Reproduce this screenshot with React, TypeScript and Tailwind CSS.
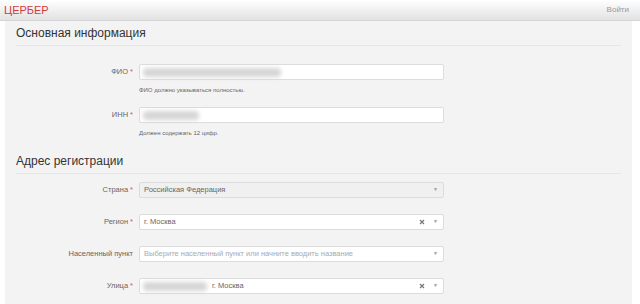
const font = "font-['Liberation_Sans',Arial,sans-serif]";

function Label({ text, required }: { text: string; required?: boolean }) {
  return (
    <div className="w-[123px] shrink-0 pr-[6px] text-right text-[7.5px] text-[#666]">
      {text}
      {required && <span className="ml-[2px] text-[#d9534f]">*</span>}
    </div>
  );
}

function Blur({ w }: { w: number }) {
  return (
    <div
      className="h-[9px] rounded-sm bg-[#d6d6d6] blur-[2px]"
      style={{ width: w }}
    />
  );
}

function Arrow() {
  return <span className="text-[5px] text-[#999]">▼</span>;
}

function Clear() {
  return (
    <svg width="6" height="6" viewBox="0 0 6 6" className="mr-[8px]">
      <path d="M1 1L5 5M5 1L1 5" stroke="#777" strokeWidth="1.2" />
    </svg>
  );
}

export default function App() {
  return (
    <div className={`${font} h-[304px] w-[640px] overflow-hidden bg-white`}>
      <div className="flex h-[21px] items-center justify-between border-b border-[#d4d4d4] bg-gradient-to-b from-white to-[#e2e2e2] pl-[4px] pr-[11px]">
        <span className="text-[11px] leading-none text-[#d23b3b]">ЦЕРБЕР</span>
        <span className="text-[8px] text-[#9a9a9a]">Войти</span>
      </div>

      <div className="ml-[5px] h-full w-[627px] bg-[#f3f3f3] px-[11px]">
        <div className="border-b border-[#e6e6e6] pt-[3px] pb-[3px] text-[12px] text-[#333]">
          Основная информация
        </div>

        <div className="mt-[18px] flex items-center">
          <Label text="ФИО" required />
          <div className="flex h-[16px] w-[305px] items-center rounded-[2px] border border-[#dcdcdc] bg-white pl-[3px]">
            <Blur w={138} />
          </div>
        </div>
        <div className="ml-[123px] mt-[6px] text-[6px] text-[#666]">ФИО должно указываться полностью.</div>

        <div className="mt-[12px] flex items-center">
          <Label text="ИНН" required />
          <div className="flex h-[16px] w-[305px] items-center rounded-[2px] border border-[#dcdcdc] bg-white pl-[3px]">
            <Blur w={56} />
          </div>
        </div>
        <div className="ml-[123px] mt-[6px] text-[6px] text-[#666]">Должен содержать 12 цифр.</div>

        <div className="mt-[14px] border-b border-[#e6e6e6] pb-[3px] text-[12px] text-[#333]">
          Адрес регистрации
        </div>

        <div className="mt-[8px] flex items-center">
          <Label text="Страна" required />
          <div className="flex h-[16px] w-[305px] items-center justify-between rounded-[2px] border border-[#dcdcdc] bg-[#f0f0f0] pl-[4px] pr-[5px] text-[7.5px] text-[#666]">
            <span>Российская Федерация</span>
            <Arrow />
          </div>
        </div>

        <div className="mt-[16px] flex items-center">
          <Label text="Регион" required />
          <div className="flex h-[16px] w-[305px] items-center justify-between rounded-[2px] border border-[#dcdcdc] bg-white pl-[4px] pr-[5px] text-[7.5px] text-[#666]">
            <span>г. Москва</span>
            <span className="flex items-center">
              <Clear />
              <Arrow />
            </span>
          </div>
        </div>

        <div className="mt-[16px] flex items-center">
          <Label text="Населенный пункт" />
          <div className="flex h-[16px] w-[305px] items-center justify-between rounded-[2px] border border-[#dcdcdc] bg-white pl-[4px] pr-[5px] text-[7.5px] text-[#aaa]">
            <span>Выберите населенный пункт или начните вводить название</span>
            <Arrow />
          </div>
        </div>

        <div className="mt-[16px] flex items-center">
          <Label text="Улица" required />
          <div className="flex h-[16px] w-[305px] items-center justify-between rounded-[2px] border border-[#dcdcdc] bg-white pl-[3px] pr-[5px] text-[7.5px] text-[#666]">
            <span className="flex items-center">
              <Blur w={64} />
              <span className="ml-[5px]">г. Москва</span>
            </span>
            <span className="flex items-center">
              <Clear />
              <Arrow />
            </span>
          </div>
        </div>
      </div>
    </div>
  );
}
